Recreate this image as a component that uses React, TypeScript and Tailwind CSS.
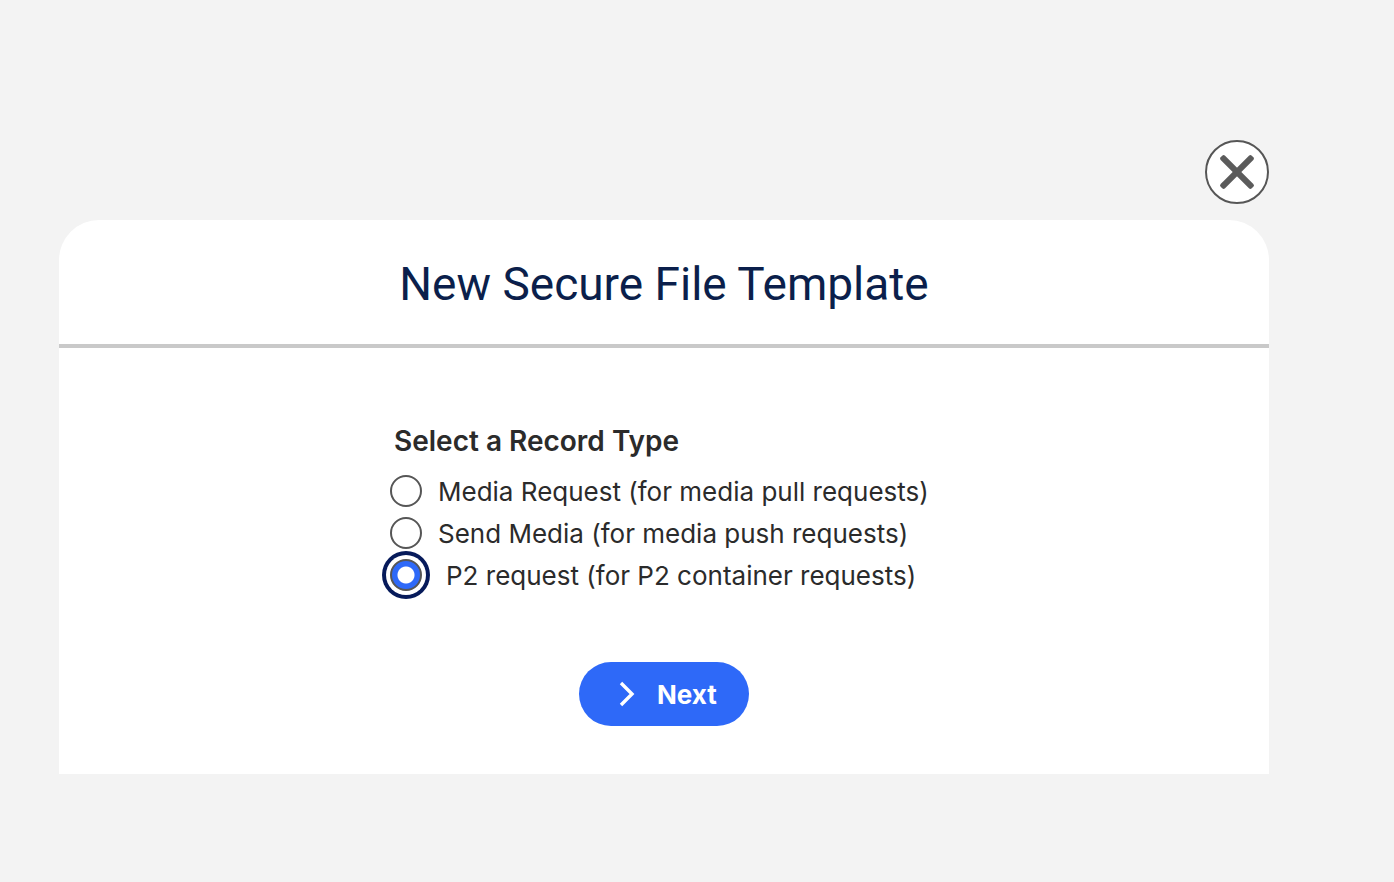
import { useState } from "react";

const recordTypes = [
  { id: "media-request", label: "Media Request (for media pull requests)" },
  { id: "send-media", label: "Send Media (for media push requests)" },
  { id: "p2-request", label: "P2 request (for P2 container requests)" },
];

function RecordTypeOption({
  id,
  label,
  checked,
  onSelect,
}: {
  id: string;
  label: string;
  checked: boolean;
  onSelect: (id: string) => void;
}) {
  return (
    <div className="flex h-[42px] items-center">
      <input
        type="radio"
        id={id}
        name="record-type"
        checked={checked}
        onChange={() => onSelect(id)}
        className="size-8 shrink-0 appearance-none rounded-full border-2 border-[#565656] bg-white outline-none checked:border-[#565656] checked:bg-[radial-gradient(circle,#ffffff_8px,#2e69f8_9px)] checked:ring-4 checked:ring-[#061a5a] checked:ring-offset-4"
      />
      <label
        htmlFor={id}
        className={`text-[26px] whitespace-nowrap text-[#2b2b2b] ${checked ? "pl-6" : "pl-4"}`}
      >
        {label}
      </label>
    </div>
  );
}

export default function App() {
  const [selected, setSelected] = useState("p2-request");

  return (
    <main className="min-h-screen bg-[#f3f3f3] pt-[140px] pr-[125px] pb-[108px] pl-[59px] font-['Inter',sans-serif]">
      <div className="flex justify-end">
        <button
          type="button"
          aria-label="Close"
          className="flex size-16 items-center justify-center rounded-full border-2 border-[#565656] bg-white"
        >
          <svg viewBox="0 0 36 36" className="size-9" fill="#5b5b5b">
            <rect x="-4" y="14.9" width="44" height="6.2" rx="2" transform="rotate(45 18 18)" />
            <rect x="-4" y="14.9" width="44" height="6.2" rx="2" transform="rotate(-45 18 18)" />
          </svg>
        </button>
      </div>

      <section role="dialog" aria-labelledby="dialog-title" className="mt-4 rounded-t-[40px] bg-white">
        <header className="border-b-4 border-[#c9c9c9] px-8 pt-[34px] pb-[30px]">
          <h1
            id="dialog-title"
            className="text-center font-['Roboto','Inter',sans-serif] text-[46px] leading-[60px] text-[#0b1f4b]"
          >
            New Secure File Template
          </h1>
        </header>

        <form className="flex flex-col items-center pt-[72px] pb-12" onSubmit={(e) => e.preventDefault()}>
          <fieldset className="w-[548px]">
            <legend className="pl-1 text-[28px] leading-[42px] font-semibold text-[#2b2b2b]">
              Select a Record Type
            </legend>
            <div className="pt-2">
              {recordTypes.map((type) => (
                <RecordTypeOption
                  key={type.id}
                  id={type.id}
                  label={type.label}
                  checked={selected === type.id}
                  onSelect={setSelected}
                />
              ))}
            </div>
          </fieldset>

          <button
            type="submit"
            className="mt-[66px] flex h-16 w-[170px] items-center rounded-full bg-[#2e69f8] pl-10 text-[26px] font-bold text-white"
          >
            <svg viewBox="0 0 16 26" className="mr-[22px] h-[26px] w-4" fill="none" stroke="currentColor" strokeWidth="3.4">
              <path d="M2 2 13 13 2 24" />
            </svg>
            Next
          </button>
        </form>
      </section>
    </main>
  );
}
